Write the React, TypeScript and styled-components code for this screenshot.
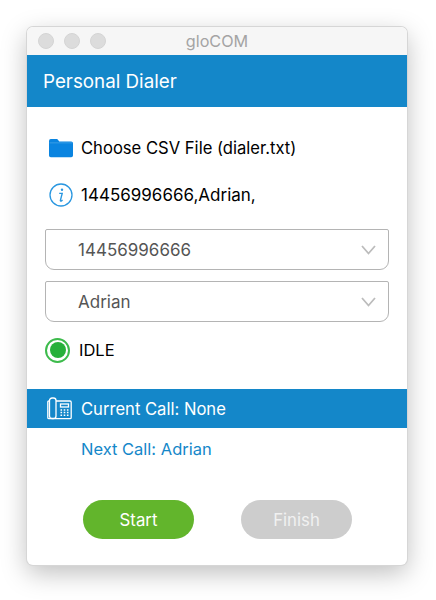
import styled, { createGlobalStyle } from 'styled-components';

const GlobalStyle = createGlobalStyle`
    html, body {
        margin: 0;
        padding: 0;
        background: #fff;
        font-family: Inter, "Liberation Sans", sans-serif;
    }
`;

const Page = styled.div`
    width: 436px;
    height: 600px;
    padding: 27px 29px 35px 27px;
    box-sizing: border-box;
    overflow: hidden;
`;

const Window = styled.div`
    width: 380px;
    height: 538px;
    display: flex;
    flex-direction: column;
    background: #fff;
    border-radius: 6px;
    overflow: hidden;
    box-shadow: 0 0 0 1px #d6d6d6, 0 8px 26px rgba(0, 0, 0, 0.26);
`;

const TitleBar = styled.div`
    position: relative;
    height: 28px;
    flex: none;
    display: flex;
    align-items: center;
    justify-content: center;
    background: #f6f6f6;
    color: #a4a4a4;
    font-size: 16.2px;
`;

const Lights = styled.div`
    position: absolute;
    left: 11px;
    top: 6px;
    display: flex;
    gap: 10px;
`;

const Light = styled.span`
    width: 16px;
    height: 16px;
    border-radius: 50%;
    background: #dcdcdc;
    border: 1px solid #d4d4d4;
    box-sizing: border-box;
`;

const Header = styled.div`
    height: 52px;
    flex: none;
    display: flex;
    align-items: center;
    padding-left: 16px;
    background: #1487c9;
    color: #fff;
    font-size: 18.8px;
`;

const Body = styled.div`
    flex: 1;
    display: flex;
    flex-direction: column;
    padding-top: 28px;
`;

const InfoRow = styled.div<{ $size: number }>`
    height: 26px;
    display: flex;
    align-items: center;
    gap: 8px;
    padding-left: 22px;
    margin-bottom: 21px;
    color: #000;
    font-size: ${(p) => p.$size}px;
`;

const IconSlot = styled.span`
    width: 24px;
    height: 24px;
    flex: none;
    display: flex;
    align-items: center;
    justify-content: center;
`;

const Select = styled.div`
    width: 344px;
    height: 41px;
    margin: 0 0 11px 18px;
    flex: none;
    display: flex;
    align-items: center;
    justify-content: space-between;
    padding: 0 12px 0 32px;
    box-sizing: border-box;
    border: 1.5px solid #b4b4b4;
    border-radius: 2px 2px 9px 9px;
    color: #555;
    font-size: 17px;
`;

const StatusRow = styled.div`
    height: 26px;
    display: flex;
    align-items: center;
    gap: 9px;
    padding-left: 18px;
    margin-top: 4px;
    color: #000;
    font-size: 16.5px;
`;

const StatusRing = styled.span`
    width: 25px;
    height: 25px;
    flex: none;
    box-sizing: border-box;
    display: flex;
    align-items: center;
    justify-content: center;
    border: 2px solid #3dbb4c;
    border-radius: 50%;
    &::after {
        content: '';
        width: 16px;
        height: 16px;
        border-radius: 50%;
        background: #27b03a;
    }
`;

const CallBar = styled.div`
    height: 39px;
    flex: none;
    margin-top: 26px;
    display: flex;
    align-items: center;
    gap: 9px;
    padding-left: 20px;
    background: #1487c9;
    color: #fff;
    font-size: 16.6px;
`;

const NextCall = styled.div`
    padding: 11px 0 0 54px;
    color: #1487c9;
    font-size: 16.5px;
    line-height: 20px;
`;

const Buttons = styled.div`
    display: flex;
    gap: 47px;
    padding: 41px 0 0 56px;
`;

const Button = styled.button<{ $disabled?: boolean }>`
    width: 111px;
    height: 39px;
    border: none;
    border-radius: 20px;
    font-family: inherit;
    font-size: 16.8px;
    color: ${(p) => (p.$disabled ? '#f1f1f1' : '#fff')};
    background: ${(p) => (p.$disabled ? '#cdcdcd' : '#62b52c')};
`;

function FolderIcon() {
    return (
        <svg width="27" height="22" viewBox="0 0 27 22">
            <path d="M0 3 Q0 1 2 1 H8.5 Q9.7 1 10.5 2.2 L11.5 3.6 H25 Q27 3.6 27 5.6 V19.5 Q27 21.5 25 21.5 H2 Q0 21.5 0 19.5 Z" fill="#0a84e0" />
            <path d="M0.6 5.2 H26.4" stroke="#4aa6ea" strokeWidth="0.8" />
        </svg>
    );
}

function InfoIcon() {
    return (
        <svg width="24" height="24" viewBox="0 0 24 24">
            <circle cx="12" cy="12" r="11" fill="none" stroke="#2a97e0" strokeWidth="1.3" />
            <circle cx="13" cy="6.8" r="1.2" fill="#2a97e0" />
            <path d="M10.2 10.4 H13.2 L11.4 17.4 Q11.2 18.4 12.2 18 L13.6 17.2" fill="none" stroke="#2a97e0" strokeWidth="1.4" />
        </svg>
    );
}

function Chevron() {
    return (
        <svg width="15" height="10" viewBox="0 0 15 10">
            <path d="M1 1 L7.5 8.5 L14 1" fill="none" stroke="#bcbcbc" strokeWidth="1.8" />
        </svg>
    );
}

function DeskPhoneIcon() {
    return (
        <svg width="25" height="23" viewBox="0 0 25 23" fill="none" stroke="#fff" strokeWidth="1.3">
            <rect x="2.5" y="1" width="6.5" height="20.5" rx="2.6" />
            <path d="M2.5 4 H2 Q0.8 4 0.8 5.2 V20.4 Q0.8 21.6 2 21.6 H23 Q24.2 21.6 24.2 20.4 V5.2 Q24.2 4 23 4 H9" />
            <rect x="13.5" y="7" width="8" height="3" />
            <path d="M13.5 13 H15.1 M16.7 13 H18.3 M19.9 13 H21.5 M13.5 15.6 H15.1 M16.7 15.6 H18.3 M19.9 15.6 H21.5 M13.5 18.2 H15.1 M16.7 18.2 H18.3 M19.9 18.2 H21.5" strokeWidth="1.5" />
        </svg>
    );
}

function App() {
    return (
        <Page>
            <GlobalStyle />
            <Window>
                <TitleBar>
                    <Lights>
                        <Light />
                        <Light />
                        <Light />
                    </Lights>
                    gloCOM
                </TitleBar>
                <Header>Personal Dialer</Header>
                <Body>
                    <InfoRow $size={16.6}>
                        <IconSlot><FolderIcon /></IconSlot>
                        Choose CSV File (dialer.txt)
                    </InfoRow>
                    <InfoRow $size={17}>
                        <IconSlot><InfoIcon /></IconSlot>
                        14456996666,Adrian,
                    </InfoRow>
                    <Select>
                        14456996666
                        <Chevron />
                    </Select>
                    <Select>
                        Adrian
                        <Chevron />
                    </Select>
                    <StatusRow>
                        <StatusRing />
                        IDLE
                    </StatusRow>
                    <CallBar>
                        <DeskPhoneIcon />
                        Current Call: None
                    </CallBar>
                    <NextCall>Next Call: Adrian</NextCall>
                    <Buttons>
                        <Button>Start</Button>
                        <Button $disabled>Finish</Button>
                    </Buttons>
                </Body>
            </Window>
        </Page>
    );
}

export default App;
